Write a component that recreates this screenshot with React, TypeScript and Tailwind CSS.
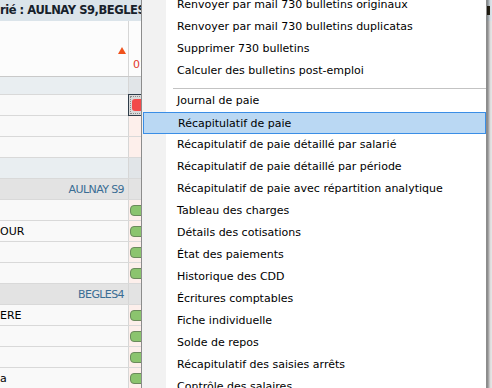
type Row = {
  kind: "band" | "group" | "row";
  label?: string;
  pill?: "green" | "red";
};

const rows: Row[] = [
  { kind: "row", pill: "red" },
  { kind: "row" },
  { kind: "row" },
  { kind: "band" },
  { kind: "group", label: "AULNAY S9" },
  { kind: "row", pill: "green" },
  { kind: "row", label: "OUR", pill: "green" },
  { kind: "row", pill: "green" },
  { kind: "row", pill: "green" },
  { kind: "group", label: "BEGLES4" },
  { kind: "row", label: "ERE", pill: "green" },
  { kind: "row", pill: "green" },
  { kind: "row", pill: "green" },
  { kind: "row", label: "a", pill: "green" },
];

const topItems = [
  "Renvoyer par mail 730 bulletins originaux",
  "Renvoyer par mail 730 bulletins duplicatas",
  "Supprimer 730 bulletins",
  "Calculer des bulletins post-emploi",
];

const reportItems = [
  "Journal de paie",
  "Récapitulatif de paie",
  "Récapitulatif de paie détaillé par salarié",
  "Récapitulatif de paie détaillé par période",
  "Récapitulatif de paie avec répartition analytique",
  "Tableau des charges",
  "Détails des cotisations",
  "État des paiements",
  "Historique des CDD",
  "Écritures comptables",
  "Fiche individuelle",
  "Solde de repos",
  "Récapitulatif des saisies arrêts",
  "Contrôle des salaires",
];

function StatusCell({ row }: { row: Row }) {
  const bg =
    row.kind === "group"
      ? "bg-[#e3e3e3]"
      : row.kind === "band"
        ? "bg-[#e1e5e8]"
        : "bg-[#fdefeb]";
  return (
    <div className={`relative h-full w-[13px] border-l border-[#d6d6d6] ${bg}`}>
      {row.pill === "green" && (
        <div className="flex h-full items-center pl-[1px]">
          <span className="h-[11px] w-[16px] shrink-0 rounded-l-[4px] border border-[#6c8a5c] bg-[#8bc46e]" />
        </div>
      )}
      {row.pill === "red" && (
        <div className="absolute -top-[1px] -bottom-[1px] -left-[1px] w-[16px] border border-[#2f3d4a] bg-[#d9d9d9] p-[1px]">
          <div className="flex h-full items-center border border-dotted border-[#8a8a8a] pl-[1px]">
            <span className="h-[12px] w-[14px] rounded-l-[3px] bg-[#f24a4a]" />
          </div>
        </div>
      )}
    </div>
  );
}

function TableRow({ row }: { row: Row }) {
  const bg =
    row.kind === "group"
      ? "bg-[#e3e3e3]"
      : row.kind === "band"
        ? "bg-[#e9eef1]"
        : "bg-[#f9f9f9]";
  return (
    <div className={`flex h-[21px] border-b border-[#d9d9d9] ${bg}`}>
      <div
        className={`w-[128px] overflow-hidden whitespace-nowrap text-[11px] leading-[21px] ${
          row.kind === "group"
            ? "pr-[4px] text-right tracking-[-0.6px] text-[#3a6d94]"
            : "text-black"
        }`}
      >
        {row.label}
      </div>
      <StatusCell row={row} />
    </div>
  );
}

function MenuItem({ label, active }: { label: string; active?: boolean }) {
  return (
    <div
      className={`h-[22px] whitespace-nowrap text-[11px] leading-[22px] text-black ${
        active
          ? "ml-[1px] border border-[#3a8ee6] bg-[#bad8f3] pl-[34px] leading-[20px]"
          : "pl-[35px]"
      }`}
    >
      {label}
    </div>
  );
}

export default function App() {
  return (
    <div className="relative h-[388px] w-[492px] overflow-hidden bg-[#e4e4e4] font-['DejaVu_Sans',sans-serif]">
      {/* title band */}
      <div className="flex h-[21px] items-center bg-[#dbe4ea]">
        <span className="whitespace-nowrap text-[11.5px] font-bold tracking-[-0.45px] text-[#17212b]">
          rié : AULNAY S9,BEGLES4
        </span>
        <span className="ml-auto mr-[2px] h-[9px] w-[3px] bg-[#2a2416]" />
      </div>

      <div className="flex">
        <div className="w-[141px]">
          {/* column header */}
          <div className="flex h-[56px] border-b border-[#c9c9c9] bg-[#fcfcfc]">
            <div className="flex w-[128px] justify-end pr-[2px] pt-[26px]">
              <svg width="8" height="7" viewBox="0 0 8 7">
                <polygon points="4,0 8,7 0,7" fill="#f0521c" />
              </svg>
            </div>
            <div className="w-[13px] overflow-hidden border-l border-[#d6d6d6] pl-[4px] pt-[37px] text-[11px] leading-[13px] text-[#e2372b]">
              01
            </div>
          </div>
          <div className="flex h-[18px] border-b border-[#d9d9d9] bg-[#e9eef1]">
            <div className="w-[128px]" />
            <div className="w-[13px] border-l border-[#d6d6d6] bg-[#e1e5e8]" />
          </div>
          {rows.map((row, i) => (
            <TableRow key={i} row={row} />
          ))}
        </div>
      </div>

      {/* context menu */}
      <div className="absolute left-[141px] top-[-6px] w-[346px] border-l border-r border-[#8c8c8c] bg-[linear-gradient(to_right,#f2f2f2_24px,#ffffff_24px)] shadow-[2px_2px_2px_rgba(0,0,0,0.4)]">
        {topItems.map((t) => (
          <MenuItem key={t} label={t} />
        ))}
        <div className="h-[8px] pt-[6px]">
          <div className="ml-[31px] h-px bg-[#c3c3c3]" />
        </div>
        {reportItems.map((t) => (
          <MenuItem key={t} label={t} active={t === "Récapitulatif de paie"} />
        ))}
      </div>
    </div>
  );
}
